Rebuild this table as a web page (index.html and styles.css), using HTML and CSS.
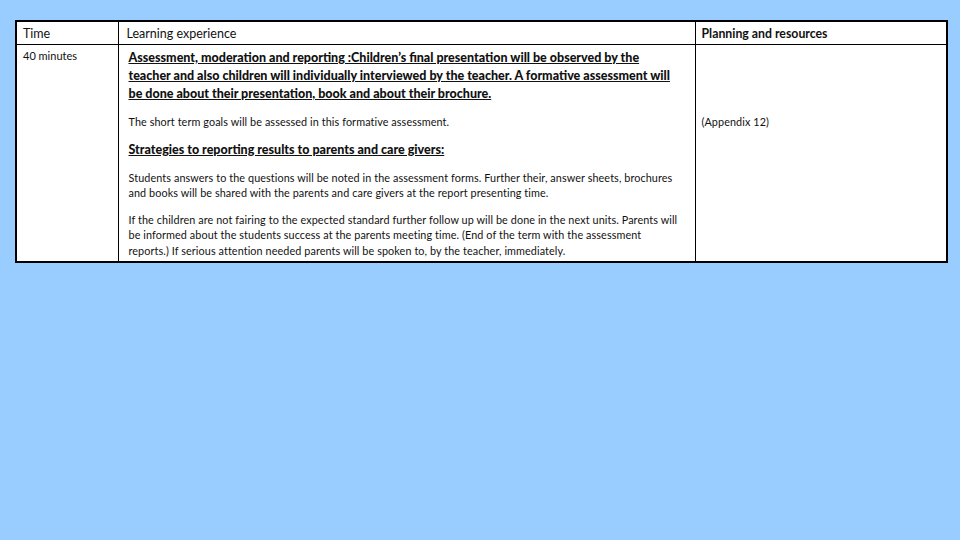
FILE: index.html
```html
<!DOCTYPE html>
<html lang="en">
<head>
<meta charset="utf-8">
<link rel="stylesheet" href="styles.css">
</head>
<body>
<div class="page">
  <table class="plan">
    <colgroup>
      <col class="c-time">
      <col class="c-learn">
      <col class="c-res">
    </colgroup>
    <thead>
      <tr>
        <th class="h-time">Time</th>
        <th class="h-learn">Learning experience</th>
        <th class="h-res">Planning and resources</th>
      </tr>
    </thead>
    <tbody>
      <tr>
        <td class="d-time">40 minutes</td>
        <td class="d-learn">
          <p class="strong">Assessment, moderation and reporting :Children’s final presentation will be observed by the teacher and also children will individually interviewed by the teacher. A formative assessment will be done about their presentation, book and about their brochure.</p>
          <p class="small first">The short term goals will be assessed in this formative assessment.</p>
          <p class="strong sub">Strategies to reporting results to parents and care givers:</p>
          <p class="small after">Students answers to the questions will be noted in the assessment forms. Further their, answer sheets, brochures and books will be shared with the parents and care givers at the report presenting time.</p>
          <p class="small">If the children are not fairing to the expected standard further follow up will be done in the next units. Parents will be informed about the students success at the parents meeting time. (End of the term with the assessment reports.) If serious attention needed parents will be spoken to, by the teacher, immediately.</p>
        </td>
        <td class="d-res">
          <p class="small appendix">(Appendix 12)</p>
        </td>
      </tr>
    </tbody>
  </table>
</div>
</body>
</html>
```
FILE: styles.css
```css
html, body {
  margin: 0;
  padding: 0;
}
body {
  background: #99ccff;
  width: 960px;
  height: 540px;
  overflow: hidden;
  font-family: Lato, "Open Sans", "Liberation Sans", sans-serif;
  color: #111;
}
.page {
  padding: 20px 0 0 15px;
}
.plan {
  border-collapse: collapse;
  background: #fff;
  border: 2px solid #000;
  width: 931px;
  table-layout: fixed;
}
.c-time { width: 102px; }
.c-learn { width: 577px; }
.c-res { width: 252px; }
.plan th, .plan td {
  border: 1px solid #000;
  text-align: left;
  vertical-align: top;
}
.plan th {
  font-weight: normal;
  font-size: 12.5px;
  height: 22px;
  padding: 0 6px;
  vertical-align: middle;
}
.plan th.h-learn { padding-left: 8px; }
.plan th.h-res { font-weight: bold; font-size: 12.3px; }
.plan td {
  padding: 4px 6px 2px 6px;
}
.d-time {
  font-size: 11px;
}
.plan td.d-learn {
  padding: 4px 14px 2px 10px;
}
p { margin: 0; }
.strong {
  font-weight: 900;
  font-size: 12.5px;
  line-height: 18px;
  text-decoration: underline;
}
.strong.sub { margin-top: 11px; }
.small {
  font-size: 10.8px;
  letter-spacing: 0.1px;
  line-height: 15.6px;
  margin-top: 11px;
}
.small.first { margin-top: 11px; }
.small.after { margin-top: 11px; }
.appendix {
  margin-top: 65px;
  font-size: 10.8px;
}
```
